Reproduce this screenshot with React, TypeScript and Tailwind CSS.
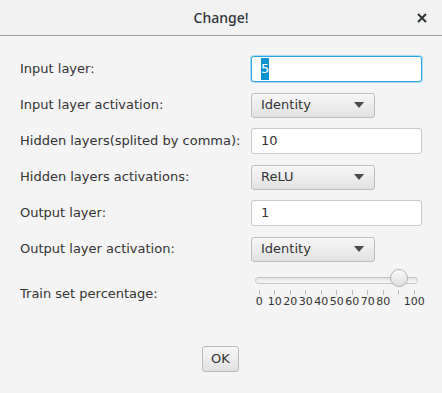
import { ReactNode } from 'react';

const font = { fontFamily: '"DejaVu Sans", sans-serif' };

const Row = ({
  label,
  h = 'h-[36px]',
  labelClass = '',
  children,
}: {
  label: string;
  h?: string;
  labelClass?: string;
  children: ReactNode;
}) => (
  <div className={`flex items-center ${h}`}>
    <div className={`w-[251px] shrink-0 whitespace-nowrap pl-5 text-[13px] text-[#333333] ${labelClass}`}>{label}</div>
    {children}
  </div>
);

const TextField = ({ value, focused = false }: { value: string; focused?: boolean }) => (
  <div
    className={`flex h-[26px] w-[171px] shrink-0 items-center rounded-[3px] bg-white px-[9px] text-[13px] text-[#333333] ${
      focused
        ? 'border border-[#2ea3e3] shadow-[0_0_0_1px_#a9dcf5]'
        : 'border border-[#c8c8c8]'
    }`}
  >
    {focused ? <span className="bg-[#0a93d1] py-[1px] text-white">{value}</span> : value}
  </div>
);

const Combo = ({ value }: { value: string }) => (
  <div className="flex h-[25px] w-[124px] shrink-0 items-center justify-between rounded-[3px] border border-[#bdbdbd] bg-gradient-to-b from-[#f6f6f6] to-[#e2e2e2] pl-[9px] pr-[10px] text-[13px] text-[#333333]">
    <span>{value}</span>
    <svg width="10" height="6" viewBox="0 0 10 6">
      <path d="M0 0 H10 L5 6 Z" fill="#4a4a4a" />
    </svg>
  </div>
);

const ticks = ['0', '10', '20', '30', '40', '50', '60', '70', '80', '', '100'];

const Slider = ({ value }: { value: number }) => (
  <div className="flex w-[171px] shrink-0 flex-col">
    <div className="relative mx-[4px] h-[16px]">
      <div className="absolute left-0 right-0 top-[4px] h-[7px] rounded-full border border-[#c4c4c4] bg-gradient-to-b from-[#e4e4e4] to-[#f8f8f8]" />
      <div
        className="absolute top-[-4px] h-[18px] w-[18px] -translate-x-1/2 rounded-full border border-[#b5b5b5] bg-gradient-to-b from-[#fafafa] to-[#dedede]"
        style={{ left: `${(value / 100) * 155 + 4}px` }}
      />
    </div>
    <div className="flex pl-[0.5px]">
      {ticks.map((t, i) => (
        <div key={i} className="flex w-[15.5px] flex-col items-center">
          <div className="mt-[1px] h-[5px] w-px bg-[#b8b8b8]" />
          <div className="whitespace-nowrap text-[11px] leading-[14px] text-[#333333]">{t}</div>
        </div>
      ))}
    </div>
  </div>
);

export default function App() {
  return (
    <div className="h-[393px] w-[442px] overflow-hidden bg-white" style={font}>
      <div className="flex h-full flex-col rounded-t-[7px] bg-[#f4f4f4]">
        {/* Title bar */}
        <div className="relative flex h-[36px] shrink-0 items-center justify-center border-b border-[#9c9c9c] bg-[#f2f2f2]">
          <span
            className="text-[14px] font-medium text-[#2e3436]"
            style={{ fontFamily: '"Noto Sans", sans-serif' }}
          >
            Change!
          </span>
          <svg className="absolute right-[15px] top-[13px]" width="10" height="10" viewBox="0 0 10 10">
            <path d="M1 1 L9 9 M9 1 L1 9" stroke="#2e3436" strokeWidth="2" />
          </svg>
        </div>

        <div className="flex flex-col pt-[15px]">
          <Row label="Input layer:">
            <TextField value="5" focused />
          </Row>
          <Row label="Input layer activation:">
            <Combo value="Identity" />
          </Row>
          <Row label="Hidden layers(splited by comma):">
            <TextField value="10" />
          </Row>
          <Row label="Hidden layers activations:">
            <Combo value="ReLU" />
          </Row>
          <Row label="Output layer:">
            <TextField value="1" />
          </Row>
          <Row label="Output layer activation:">
            <Combo value="Identity" />
          </Row>
          <Row label="Train set percentage:" h="h-[48px]" labelClass="pt-[5px]">
            <Slider value={90} />
          </Row>
        </div>

        <div className="mt-[31px] flex justify-center pr-[1px]">
          <div className="flex h-[26px] w-[37px] items-center justify-center rounded-[3px] border border-[#b9b9b9] bg-gradient-to-b from-[#f7f7f7] to-[#e1e1e1] text-[13px] text-[#333333]">
            OK
          </div>
        </div>
      </div>
    </div>
  );
}
